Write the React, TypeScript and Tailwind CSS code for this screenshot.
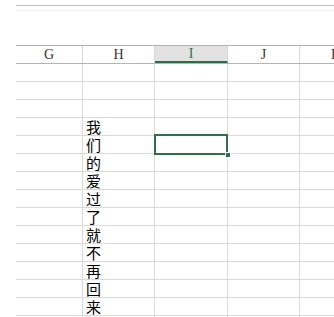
import React from 'react';

const columns = [
  { name: 'G', width: 67 },
  { name: 'H', width: 72 },
  { name: 'I', width: 73 },
  { name: 'J', width: 72 },
  { name: 'K', width: 72 },
];

const text = '我们的爱过了就不再回来'.split('');
const firstTextRow = 3;
const selectedRow = 4;

const App = () => {
  const rows = Array.from({ length: 15 }, (_, i) => i);

  return (
    <div className="w-[334px] h-[317px] overflow-hidden bg-white">
      <div className="ml-[16px] h-[45px] w-[400px]">
        <div className="h-[6px] border-b border-[#c4c4c4]" />
        <div className="h-[5px] border-b border-[#f0f0f0]" />
      </div>

      <div className="ml-[16px] w-[400px]">
        {/* header */}
        <div className="flex h-[19px] border-y border-[#b4b4b4]">
          {columns.map((c, i) => (
            <div
              key={c.name}
              style={{ width: c.width }}
              className={`flex items-center justify-center text-[14px] leading-none border-r border-[#d8d8d8] ${
                c.name === 'I' ? 'bg-[#e2e2e2] border-b-2 border-b-[#2f6e4b] text-[#2f6e4b]' : 'text-[#333]'
              } ${i === columns.length - 1 ? 'border-r-0' : ''}`}
            >
              <span className="font-['Liberation_Serif',serif]">{c.name}</span>
            </div>
          ))}
        </div>

        {/* body */}
        {rows.map((r) => (
          <div key={r} className="flex h-[18px] border-b border-[#dadada]">
            {columns.map((c) => (
              <div
                key={c.name}
                style={{ width: c.width }}
                className={`border-r border-[#dadada] flex items-center ${
                  c.name === 'I' && r === selectedRow ? 'relative z-10' : ''
                }`}
              >
                {c.name === 'H' && r >= firstTextRow && r - firstTextRow < text.length && (
                  <span className="pl-[3px] text-[15px] leading-[17px] text-black font-['Noto_Sans_CJK_SC',sans-serif]">
                    {text[r - firstTextRow]}
                  </span>
                )}
                {c.name === 'I' && r === selectedRow && (
                  <div className="absolute -left-[1px] -top-[2px] w-[74px] h-[21px] border-2 border-[#2f6e4b]">
                    <div className="absolute -right-[5px] -bottom-[5px] w-[6px] h-[6px] bg-[#2f6e4b] border border-white" />
                  </div>
                )}
              </div>
            ))}
          </div>
        ))}
      </div>
    </div>
  );
};

export default App;
